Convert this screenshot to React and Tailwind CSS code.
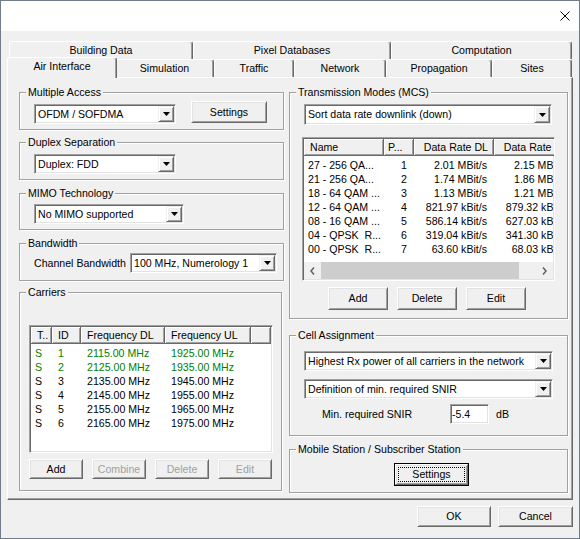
import React from 'react';

// classic 3D edges
const sunken = 'border border-t-[#a0a0a0] border-l-[#a0a0a0] border-r-white border-b-white shadow-[inset_1px_1px_0_#696969,inset_-1px_-1px_0_#e3e3e3] p-[1px]';
const raised = 'border border-t-white border-l-white border-r-[#696969] border-b-[#696969] shadow-[inset_1px_1px_0_#e3e3e3,inset_-1px_-1px_0_#a0a0a0]';
const headCell = 'flex h-full shrink-0 items-center border-r border-b border-r-[#696969] border-b-[#696969] bg-[#f0f0f0] shadow-[inset_1px_1px_0_#fff,inset_-1px_-1px_0_#a0a0a0] whitespace-nowrap overflow-hidden';

const Arrow = () => (
    <svg width="7" height="4" viewBox="0 0 7 4"><path d="M0 0h7L3.5 4z" fill="#000" /></svg>
);

const Combo = ({ value, className = '' }) => (
    <div className={`flex h-[20px] shrink-0 bg-white ${sunken} ${className}`}>
        <span className="flex-1 truncate whitespace-nowrap pl-[2px] leading-[16px]">{value}</span>
        <span className="flex h-full w-[16px] items-center justify-center border border-t-[#f0f0f0] border-l-[#f0f0f0] border-r-[#696969] border-b-[#696969] bg-[#f0f0f0] shadow-[inset_1px_1px_0_#fff,inset_-1px_-1px_0_#a0a0a0]">
            <Arrow />
        </span>
    </div>
);

const Btn = ({ children, className = '', disabled = false, focused = false }) => {
    if (focused) {
        return (
            <button className={`flex shrink-0 border border-black bg-[#f0f0f0] ${className}`}>
                <span className={`flex flex-1 p-[2px] ${raised}`}>
                    <span className="flex flex-1 items-center justify-center border border-dotted border-black">{children}</span>
                </span>
            </button>
        );
    }
    return (
        <button className={`flex shrink-0 items-center justify-center bg-[#f0f0f0] ${raised} ${disabled ? 'text-[#a0a0a0]' : ''} ${className}`}>
            {children}
        </button>
    );
};

const Group = ({ title, className = '', children }) => (
    <div className={`relative shrink-0 border border-[#a0a0a0] shadow-[inset_1px_1px_0_#fff,1px_1px_0_#fff] ${className}`}>
        <span className="absolute left-[6px] top-[-7px] bg-[#f0f0f0] px-[2px] leading-[13px] whitespace-nowrap">{title}</span>
        {children}
    </div>
);

const tabBase = 'flex shrink-0 items-center justify-center rounded-t-[3px] border-t border-l border-r border-t-white border-l-white border-r-[#696969] bg-[#f0f0f0] shadow-[inset_-1px_0_0_#a0a0a0]';

const carriers = [
    ['S', '1', '2115.00 MHz', '1925.00 MHz', true],
    ['S', '2', '2125.00 MHz', '1935.00 MHz', true],
    ['S', '3', '2135.00 MHz', '1945.00 MHz', false],
    ['S', '4', '2145.00 MHz', '1955.00 MHz', false],
    ['S', '5', '2155.00 MHz', '1965.00 MHz', false],
    ['S', '6', '2165.00 MHz', '1975.00 MHz', false],
];

const modes = [
    ['27 - 256 QA...', '1', '2.01 MBit/s', '2.15 MBit/s'],
    ['21 - 256 QA...', '2', '1.74 MBit/s', '1.86 MBit/s'],
    ['18 - 64 QAM ...', '3', '1.13 MBit/s', '1.21 MBit/s'],
    ['12 - 64 QAM ...', '4', '821.97 kBit/s', '879.32 kBit/s'],
    ['08 - 16 QAM ...', '5', '586.14 kBit/s', '627.03 kBit/s'],
    ['04 - QPSK  R...', '6', '319.04 kBit/s', '341.30 kBit/s'],
    ['00 - QPSK  R...', '7', '63.60 kBit/s', '68.03 kBit/s'],
];

const CarrierList = () => (
    <div className={`ml-[9px] mt-[32px] flex h-[128px] w-[244px] flex-col overflow-hidden bg-white ${sunken}`}>
        <div className="flex h-[17px] shrink-0">
            <div className={`${headCell} w-[21px] pl-[6px]`}>T..</div>
            <div className={`${headCell} w-[29px] pl-[6px]`}>ID</div>
            <div className={`${headCell} w-[84px] pl-[6px]`}>Frequency DL</div>
            <div className={`${headCell} w-[86px] pl-[6px]`}>Frequency UL</div>
            <div className={`${headCell} flex-1`}></div>
        </div>
        <div className="pt-[2px]">
            {carriers.map(([t, id, dl, ul, active]) => (
                <div key={id} className={`flex h-[14px] leading-[14px] whitespace-nowrap ${active ? 'text-[#008000]' : 'text-black'}`}>
                    <span className="w-[21px] shrink-0 pl-[4px]">{t}</span>
                    <span className="w-[29px] shrink-0 pl-[6px]">{id}</span>
                    <span className="w-[84px] shrink-0 pl-[6px]">{dl}</span>
                    <span className="w-[86px] shrink-0 pl-[6px]">{ul}</span>
                </div>
            ))}
        </div>
    </div>
);

const ModeList = () => (
    <div className={`ml-[12px] mt-[12px] flex h-[144px] w-[253px] flex-col overflow-hidden bg-white ${sunken}`}>
        <div className="flex h-[17px] shrink-0">
            <div className={`${headCell} w-[80px] pl-[6px]`}>Name</div>
            <div className={`${headCell} w-[30px] pl-[4px]`}>P...</div>
            <div className={`${headCell} w-[80px] justify-end pr-[5px]`}>Data Rate DL</div>
            <div className={`${headCell} w-[80px] justify-end pr-[5px]`}>Data Rate UL</div>
        </div>
        <div className="flex-1 overflow-hidden pt-[2px]">
            {modes.map(([name, p, dl, ul]) => (
                <div key={p} className="flex h-[14px] leading-[14px] whitespace-pre">
                    <span className="w-[80px] shrink-0 pl-[4px]">{name}</span>
                    <span className="w-[30px] shrink-0 pr-[7px] text-right">{p}</span>
                    <span className="w-[80px] shrink-0 pr-[7px] text-right">{dl}</span>
                    <span className="w-[80px] shrink-0 pr-[7px] text-right">{ul}</span>
                </div>
            ))}
        </div>
        <div className="flex h-[17px] shrink-0 bg-[#f0f0f0]">
            <span className="flex w-[17px] shrink-0 items-center justify-center">
                <svg width="5" height="8" viewBox="0 0 5 8"><path d="M4 0.5 1 4l3 3.5" stroke="#606060" strokeWidth="1.5" fill="none" /></svg>
            </span>
            <span className="flex flex-1">
                <span className="w-[198px] bg-[#cdcdcd]"></span>
            </span>
            <span className="flex w-[17px] shrink-0 items-center justify-center">
                <svg width="5" height="8" viewBox="0 0 5 8"><path d="M1 0.5 4 4 1 7.5" stroke="#606060" strokeWidth="1.5" fill="none" /></svg>
            </span>
        </div>
    </div>
);

const App = () => {
    return (
        <div className="flex h-[539px] w-[580px] flex-col border border-[#707c89] bg-[#f0f0f0] font-['Liberation_Sans',Arial,sans-serif] text-[10.6px] leading-[13px] text-black">
            <div className="flex h-[30px] shrink-0 items-center justify-end bg-white pr-[9px]">
                <svg width="10" height="10" viewBox="0 0 10 10">
                    <path d="M0.5 0.5l9 9M9.5 0.5l-9 9" stroke="#000" strokeWidth="1" />
                </svg>
            </div>

            <div className="flex flex-1 flex-col px-[6px] pt-[10px]">
                {/* tab rows */}
                <div className="ml-[2px] mr-[1px] flex h-[18px]">
                    <div className={`${tabBase} w-[184px]`}>Building Data</div>
                    <div className={`${tabBase} w-[198px]`}>Pixel Databases</div>
                    <div className={`${tabBase} w-[181px]`}>Computation</div>
                </div>
                <div className="ml-[2px] mr-[1px] flex h-[18px] items-end">
                    <div className={`${tabBase} relative top-[1px] z-10 mx-[-2px] h-[21px] w-[110px] pb-[3px]`}>Air Interface</div>
                    <div className={`${tabBase} h-[18px] w-[99px]`}>Simulation</div>
                    <div className={`${tabBase} h-[18px] w-[80px]`}>Traffic</div>
                    <div className={`${tabBase} h-[18px] w-[92px]`}>Network</div>
                    <div className={`${tabBase} h-[18px] w-[106px]`}>Propagation</div>
                    <div className={`${tabBase} h-[18px] w-[80px]`}>Sites</div>
                </div>

                {/* tab page */}
                <div className="flex h-[423px] shrink-0 gap-[5px] border border-t-white border-l-white border-r-[#696969] border-b-[#696969] pl-[11px] pr-[4px] pt-[14px] shadow-[inset_-1px_-1px_0_#a0a0a0]">
                    <div className="flex w-[265px] shrink-0 flex-col">
                        <Group title="Multiple Access" className="h-[38px]">
                            <div className="flex items-start pl-[14px] pt-[8px]">
                                <Combo value="OFDM / SOFDMA" className="mt-[3px] w-[142px]" />
                                <Btn className="ml-[15px] h-[22px] w-[76px]">Settings</Btn>
                            </div>
                        </Group>
                        <Group title="Duplex Separation" className="mt-[12px] h-[38px]">
                            <div className="pl-[14px] pt-[11px]">
                                <Combo value="Duplex: FDD" className="w-[142px]" />
                            </div>
                        </Group>
                        <Group title="MIMO Technology" className="mt-[13px] h-[37px]">
                            <div className="pl-[14px] pt-[10px]">
                                <Combo value="No MIMO supported" className="w-[150px]" />
                            </div>
                        </Group>
                        <Group title="Bandwidth" className="mt-[13px] h-[38px]">
                            <div className="flex items-center pl-[14px] pt-[9px]">
                                <span className="w-[96px] shrink-0 whitespace-nowrap">Channel Bandwidth</span>
                                <Combo value="100 MHz, Numerology 1" className="w-[147px]" />
                            </div>
                        </Group>
                        <Group title="Carriers" className="mt-[11px] h-[199px] w-[263px]">
                            <CarrierList />
                            <div className="ml-[9px] mt-[6px] flex gap-[9px]">
                                <Btn className="h-[20px] w-[54px]">Add</Btn>
                                <Btn className="h-[20px] w-[54px]" disabled>Combine</Btn>
                                <Btn className="h-[20px] w-[54px]" disabled>Delete</Btn>
                                <Btn className="h-[20px] w-[54px]" disabled>Edit</Btn>
                            </div>
                        </Group>
                    </div>

                    <div className="flex w-[279px] shrink-0 flex-col">
                        <Group title="Transmission Modes (MCS)" className="h-[227px]">
                            <div className="pl-[14px] pt-[11px]">
                                <Combo value="Sort data rate downlink (down)" className="h-[21px] w-[248px]" />
                            </div>
                            <ModeList />
                            <div className="ml-[38px] mt-[6px] flex gap-[9px]">
                                <Btn className="h-[23px] w-[60px]">Add</Btn>
                                <Btn className="h-[23px] w-[60px]">Delete</Btn>
                                <Btn className="h-[23px] w-[60px]">Edit</Btn>
                            </div>
                        </Group>
                        <Group title="Cell Assignment" className="mt-[16px] h-[101px]">
                            <div className="flex flex-col pl-[14px] pt-[15px]">
                                <Combo value="Highest Rx power of all carriers in the network" className="w-[249px]" />
                                <Combo value="Definition of min. required SNIR" className="mt-[8px] w-[249px]" />
                                <div className="mt-[5px] flex items-center pl-[18px]">
                                    <span className="w-[128px] shrink-0 whitespace-nowrap">Min. required SNIR</span>
                                    <div className={`flex h-[20px] w-[39px] items-center bg-white pl-[1px] ${sunken}`}>-5.4</div>
                                    <span className="ml-[7px]">dB</span>
                                </div>
                            </div>
                        </Group>
                        <Group title="Mobile Station / Subscriber Station" className="mt-[13px] h-[44px]">
                            <div className="pl-[104px] pt-[13px]">
                                <Btn focused className="h-[23px] w-[75px]">Settings</Btn>
                            </div>
                        </Group>
                    </div>
                </div>

                <div className="mt-[6px] flex justify-end gap-[7px]">
                    <Btn className="h-[21px] w-[74px]">OK</Btn>
                    <Btn className="h-[21px] w-[75px]">Cancel</Btn>
                </div>
            </div>
        </div>
    );
};

export default App;
